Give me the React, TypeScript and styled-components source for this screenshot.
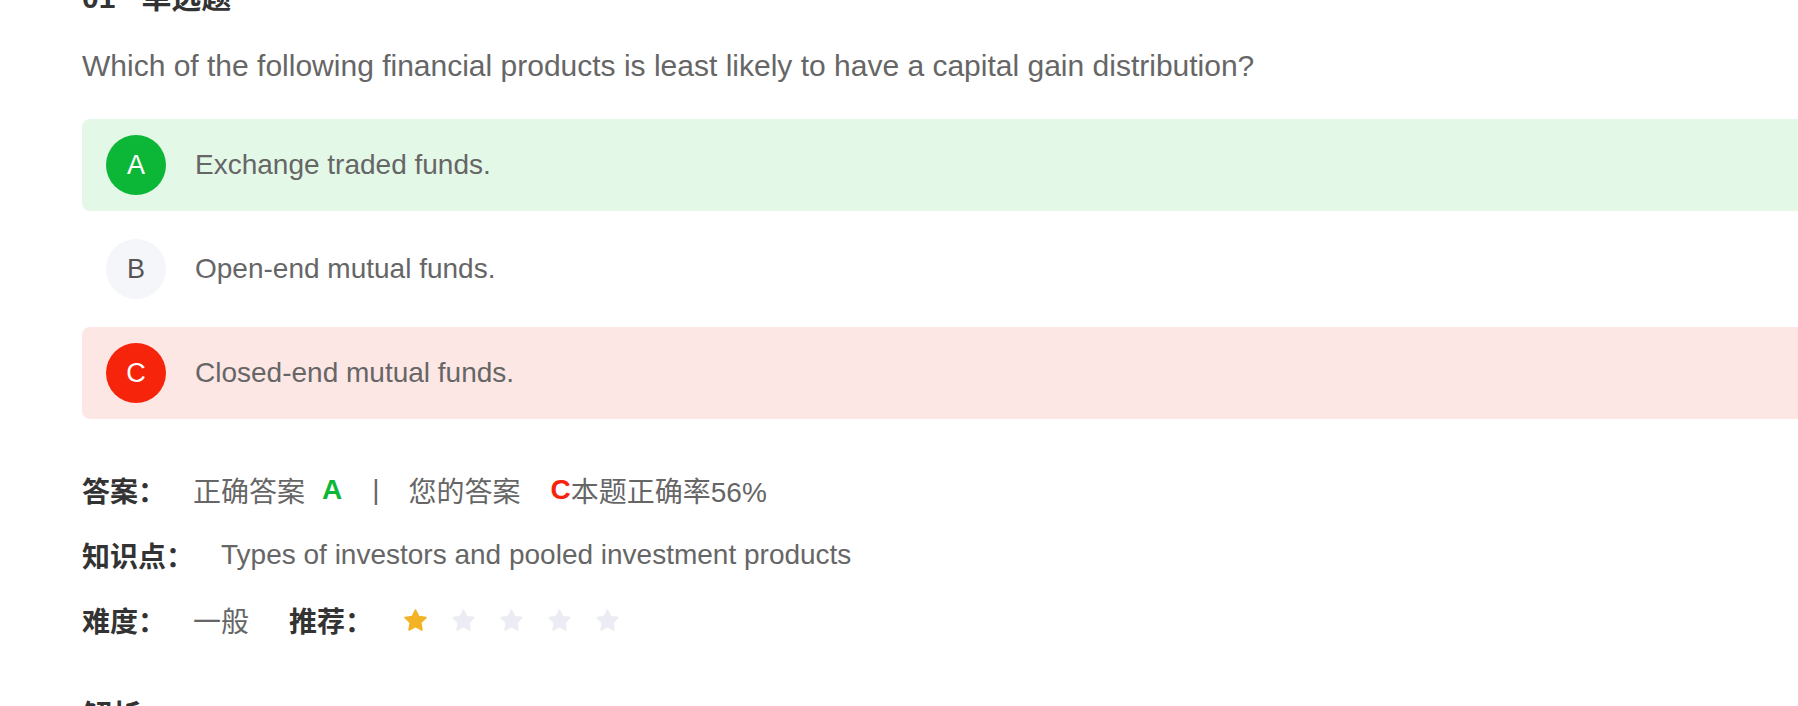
import React from "react";
import styled, { createGlobalStyle } from "styled-components";

const GlobalStyle = createGlobalStyle`
  html, body {
    margin: 0;
    padding: 0;
    background: #ffffff;
    overflow: hidden;
  }
  body {
    font-family: "Liberation Sans", "Noto Sans CJK SC", Arial, sans-serif;
    -webkit-font-smoothing: antialiased;
  }
`;

const Page = styled.div`
  display: flex;
  flex-direction: column;
  align-items: flex-start;
  margin-top: -22px;
  padding-left: 82px;
  width: 1800px;
`;

const Title = styled.h2`
  margin: 0;
  display: flex;
  gap: 26px;
  font-size: 30px;
  line-height: 40px;
  font-weight: 700;
  color: #333333;
`;

const Question = styled.p`
  margin: 27px 0 0;
  font-size: 30px;
  line-height: 42px;
  color: #666666;
`;

const OptionList = styled.div`
  margin-top: 32px;
  display: flex;
  flex-direction: column;
  gap: 12px;
  width: 100%;
`;

type Status = "correct" | "wrong" | "none";

const rowBg: Record<Status, string> = {
  correct: "#e4f8e8",
  wrong: "#fde7e5",
  none: "transparent",
};

const badgeBg: Record<Status, string> = {
  correct: "#0cb737",
  wrong: "#f6240b",
  none: "#f4f6f9",
};

const OptionRow = styled.div<{ $status: Status }>`
  display: flex;
  align-items: center;
  gap: 29px;
  height: 92px;
  padding-left: 24px;
  box-sizing: border-box;
  border-radius: 8px;
  background: ${(p) => rowBg[p.$status]};
`;

const Badge = styled.span<{ $status: Status }>`
  flex: none;
  display: flex;
  align-items: center;
  justify-content: center;
  width: 60px;
  height: 60px;
  border-radius: 50%;
  background: ${(p) => badgeBg[p.$status]};
  color: ${(p) => (p.$status === "none" ? "#555555" : "#ffffff")};
  font-size: 27px;
`;

const OptionText = styled.span`
  font-size: 28px;
  color: #666666;
`;

const InfoList = styled.div`
  margin-top: 51px;
  display: flex;
  flex-direction: column;
  gap: 25px;
`;

const InfoRow = styled.div`
  display: flex;
  align-items: center;
  height: 40px;
  font-size: 28px;
  color: #666666;
  white-space: nowrap;
`;

const Label = styled.span<{ $gapBefore?: number }>`
  font-weight: 700;
  color: #333333;
  margin-right: 27px;
  margin-left: ${(p) => p.$gapBefore ?? 0}px;
`;

const Value = styled.span``;

const Mark = styled.span<{ $color: string; $left?: number }>`
  font-weight: 700;
  color: ${(p) => p.$color};
  margin-left: ${(p) => p.$left ?? 0}px;
`;

const Separator = styled.span`
  margin: 0 29px 0 30px;
  color: #666666;
`;

const Stars = styled.div`
  display: flex;
  align-items: center;
  gap: 23px;
  margin-left: 3px;
`;

const StarIcon = styled.svg<{ $on: boolean }>`
  width: 25px;
  height: 25px;
  color: ${(p) => (p.$on ? "#f4b324" : "#ececf4")};
`;

const SectionTitle = styled.h3`
  margin: 56px 0 0;
  font-size: 30px;
  line-height: 40px;
  font-weight: 700;
  color: #333333;
`;

const Star = ({ on }: { on: boolean }) => (
  <StarIcon $on={on} viewBox="0 0 24 24">
    <polygon
      points="12,2 15.09,8.26 22,9.27 17,14.14 18.18,21.02 12,17.77 5.82,21.02 7,14.14 2,9.27 8.91,8.26"
      fill="currentColor"
      stroke="currentColor"
      strokeWidth="1.6"
      strokeLinejoin="round"
    />
  </StarIcon>
);

const options: { key: string; text: string; status: Status }[] = [
  { key: "A", text: "Exchange traded funds.", status: "correct" },
  { key: "B", text: "Open-end mutual funds.", status: "none" },
  { key: "C", text: "Closed-end mutual funds.", status: "wrong" },
];

export default function App() {
  const rating = 1;
  return (
    <>
      <GlobalStyle />
      <Page>
        <Title>
          <span>01</span>
          <span>单选题</span>
        </Title>
        <Question>
          Which of the following financial products is least likely to have a capital gain distribution?
        </Question>
        <OptionList>
          {options.map((o) => (
            <OptionRow key={o.key} $status={o.status}>
              <Badge $status={o.status}>{o.key}</Badge>
              <OptionText>{o.text}</OptionText>
            </OptionRow>
          ))}
        </OptionList>
        <InfoList>
          <InfoRow>
            <Label>答案：</Label>
            <Value>正确答案</Value>
            <Mark $color="#0cb737" $left={17}>A</Mark>
            <Separator>|</Separator>
            <Value>您的答案</Value>
            <Mark $color="#f6240b" $left={30}>C</Mark>
            <Value>本题正确率56%</Value>
          </InfoRow>
          <InfoRow>
            <Label>知识点：</Label>
            <Value>Types of investors and pooled investment products</Value>
          </InfoRow>
          <InfoRow>
            <Label>难度：</Label>
            <Value>一般</Value>
            <Label $gapBefore={40}>推荐：</Label>
            <Stars>
              {[0, 1, 2, 3, 4].map((i) => (
                <Star key={i} on={i < rating} />
              ))}
            </Stars>
          </InfoRow>
        </InfoList>
        <SectionTitle>解析</SectionTitle>
      </Page>
    </>
  );
}
